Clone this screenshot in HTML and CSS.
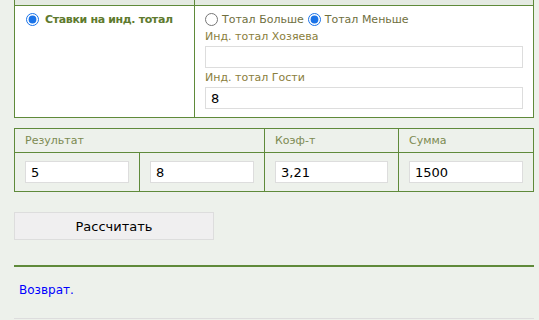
FILE: index.html
```html
<!DOCTYPE html>
<html lang="ru">
<head>
    <meta charset="UTF-8">
    <title>Калькулятор ставок</title>
    <link rel="stylesheet" href="styles.css">
</head>
<body>
    <div class="page">
        <table class="bet-table">
            <tr class="head-row">
                <td class="col-left"></td>
                <td></td>
            </tr>
            <tr class="body-row">
                <td class="col-left">
                    <label class="bet-type"><input type="radio" name="type" checked> Ставки на инд. тотал</label>
                </td>
                <td>
                    <div class="radios">
                        <label><input type="radio" name="side"> Тотал Больше</label>
                        <label><input type="radio" name="side" checked> Тотал Меньше</label>
                    </div>
                    <div class="field-label">Инд. тотал Хозяева</div>
                    <input type="text" class="field" value="">
                    <div class="field-label">Инд. тотал Гости</div>
                    <input type="text" class="field" value="8">
                </td>
            </tr>
        </table>

        <table class="result-table">
            <tr class="head-row">
                <td colspan="2">Результат</td>
                <td>Коэф-т</td>
                <td>Сумма</td>
            </tr>
            <tr>
                <td class="c1"><input type="text" class="field" value="5"></td>
                <td class="c2"><input type="text" class="field" value="8"></td>
                <td class="c3"><input type="text" class="field" value="3,21"></td>
                <td class="c4"><input type="text" class="field" value="1500"></td>
            </tr>
        </table>

        <button class="calc-btn">Рассчитать</button>

        <div class="divider"></div>

        <div class="back"><a href="#">Возврат.</a></div>

        <div class="footer-line"></div>
    </div>
</body>
</html>
```

FILE: styles.css
```css
body {
    margin: 0;
    background: #edf1eb;
    font-family: "DejaVu Sans", Verdana, sans-serif;
    font-size: 11px;
    color: #333;
}

.page {
    width: 520px;
    margin-left: 14px;
}

table {
    width: 520px;
    border-collapse: collapse;
}

td {
    border: 1px solid #5f8a3a;
    vertical-align: top;
    padding: 0 10px;
}

.bet-table .head-row td {
    height: 5px;
    padding: 0;
    background: #e4eae2;
    border-top: none;
}

.bet-table .col-left {
    width: 159px;
}

.bet-table .body-row td {
    background: #fff;
    padding-top: 6px;
    padding-bottom: 8px;
}

.bet-table .body-row .col-left {
    padding-top: 7px;
}

.bet-type {
    display: flex;
    align-items: center;
    gap: 6px;
    font-weight: bold;
    letter-spacing: -0.35px;
    color: #5e7a2e;
    margin-left: 1px;
}

.radios {
    display: flex;
    gap: 4px;
    color: #6f6f3e;
    margin-top: 1px;
}

.radios label {
    display: flex;
    align-items: center;
    gap: 4px;
}

input[type="radio"] {
    margin: 0;
    width: 13px;
    height: 13px;
    accent-color: #1a73e8;
}

.field-label {
    color: #8a7e3c;
    margin: 4px 0 3px;
    line-height: 13px;
}

.field {
    box-sizing: border-box;
    display: block;
    width: 100%;
    height: 22px;
    border: 1px solid #ddd;
    background: #fff;
    padding: 0 5px;
    font-family: "DejaVu Sans", Verdana, sans-serif;
    font-size: 13px;
    color: #000;
    outline: none;
}

.bet-table .field-label + .field + .field-label {
    margin-top: 3px;
}

.result-table {
    margin-top: 10px;
}

.result-table .head-row td {
    height: 23px;
    vertical-align: middle;
    color: #7c8a52;
    padding-top: 0;
    padding-bottom: 0;
}

.result-table td {
    padding-top: 8px;
    padding-bottom: 8px;
}

.result-table .c1,
.result-table .c2 {
    width: 104px;
}

.result-table .c3 {
    width: 113px;
}

.calc-btn {
    display: block;
    margin-top: 20px;
    width: 200px;
    height: 28px;
    background: #f0eff0;
    border: 1px solid #ddd;
    font-family: "DejaVu Sans", Verdana, sans-serif;
    font-size: 13px;
    color: #000;
}

.divider {
    margin-top: 25px;
    height: 2px;
    background: #5f8a3a;
}

.back {
    padding: 16px 5px 0;
    height: 35px;
    font-size: 12px;
}

.back a {
    color: #0000ff;
    text-decoration: none;
}

.footer-line {
    height: 1px;
    background: #ddd;
}
```
